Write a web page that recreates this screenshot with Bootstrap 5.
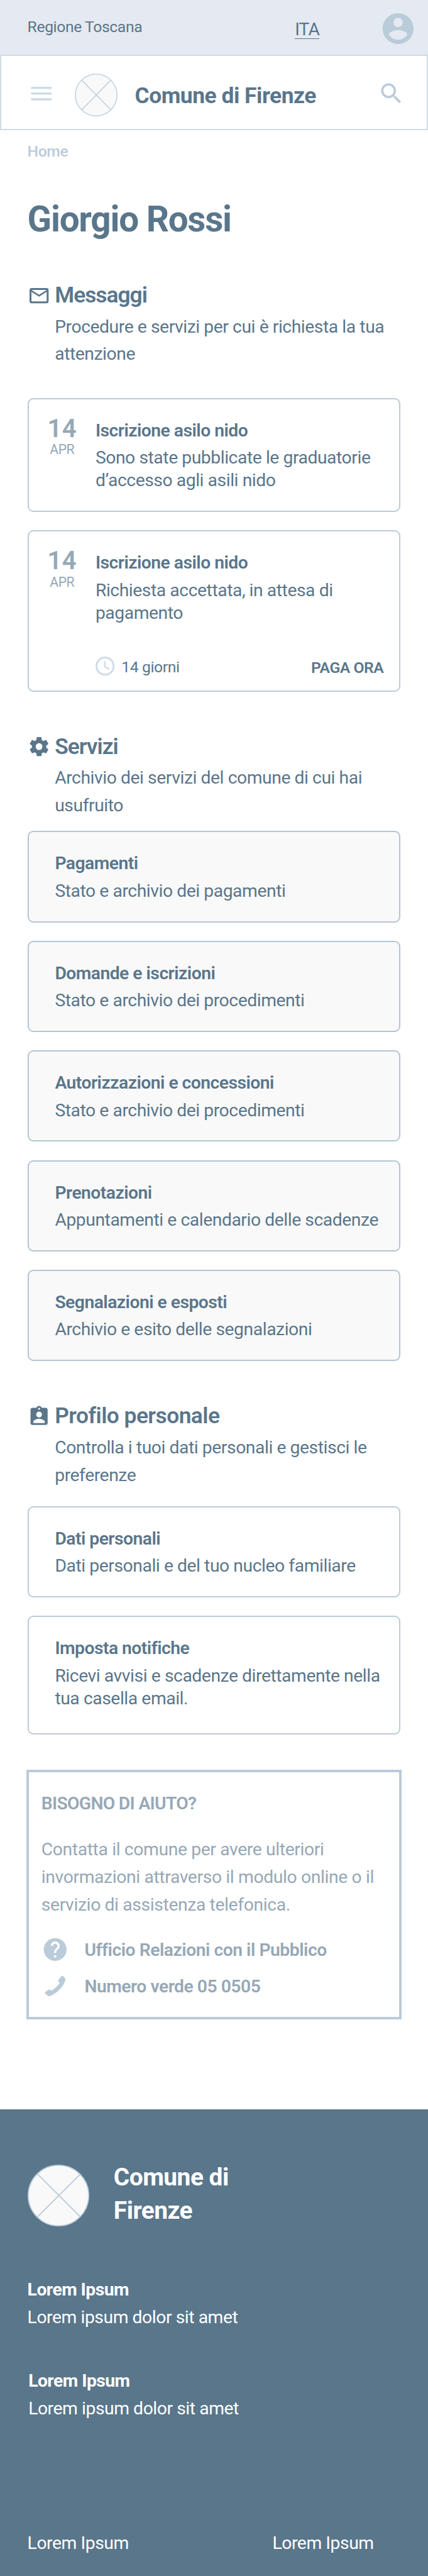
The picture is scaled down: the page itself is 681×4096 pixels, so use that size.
<!DOCTYPE html>
<html lang="it">
<head>
<meta charset="utf-8">
<meta name="viewport" content="width=device-width, initial-scale=1">
<title>Comune di Firenze</title>
<link href="https://cdn.jsdelivr.net/npm/bootstrap@5.3.0/dist/css/bootstrap.min.css" rel="stylesheet">
<style>
:root{--ink:#5a768b;--muted:#96a8b6;--line:#bacbd9;--pale:#cfdce6}
html{font-size:9.086px}
body{font-family:Roboto,"Open Sans",sans-serif;font-size:3.11rem;line-height:4rem;letter-spacing:-.015em;color:var(--ink);background:#fff;height:4096px;overflow:hidden}
h1,h2,h3,p{margin:0;color:inherit}
svg{display:block;flex:none;fill:currentColor}
.semi{font-weight:600;letter-spacing:-.018em}
.small-text{font-size:2.72rem;letter-spacing:-.016em}
.muted{color:var(--muted)}
.i40{width:4rem;height:4rem}
.i48{width:4.8rem;height:4.8rem}
.topbar{height:9.6rem;background:#e5e9f1;padding:0 1.95rem 0 4.8rem}
.topbar .region{margin-top:2.77rem}
.topbar .lang{margin-top:3.54rem;margin-right:10.6rem;line-height:3.2rem;letter-spacing:-.03em;border-bottom:1px solid var(--ink);color:inherit;text-decoration:none}
.topbar svg{width:6.48rem;height:6.48rem;margin-top:1.76rem;color:var(--line)}
.masthead{height:13.2rem;border:2px solid var(--pale);padding:0 3.8rem 0 4.6rem}
.masthead .i48{margin-top:4.2rem}
.masthead .crest{width:7.5rem;height:7.5rem;margin:3.05rem 0 0 3.45rem}
.masthead .site{font-size:3.89rem;font-weight:700;line-height:4.8rem;letter-spacing:-.013em;margin:4.55rem 0 0 3.05rem}
.crest{fill:#f9f9f9;stroke:var(--line)}
.page{padding:0 4.8rem}
.crumb{color:var(--line);margin-top:1.75rem;font-weight:500}
h1{font-size:6.23rem;font-weight:700;line-height:7.2rem;letter-spacing:-.022em;margin-top:6.2rem}
.section-head{margin-top:7.37rem}
.section-head + *{margin-top:5.26rem}
.section-head h2{font-size:3.89rem;font-weight:600;line-height:4.8rem;letter-spacing:-.015em;margin-left:.8rem}
.section-head h2.tight{letter-spacing:-.028em}
.section-head svg{margin-top:.38rem}
.section-head p{line-height:4.8rem;margin:.65rem 0 0 4.8rem}
.section-head.later{margin-top:7.27rem}
.services{margin-top:2.08rem!important}
.profile{margin-top:3.03rem!important}
.stack{gap:3.2rem}
.stack .card{border:2px solid var(--line);border-radius:1rem;color:inherit;height:16rem;padding:3.53rem 0 0 4.6rem;background:#fff}
.stack .card p{margin-top:.78rem}
.services .card{background:#f9f9f9;border-color:#b3c5d4}
.stack .message{height:20rem;padding:3.53rem 2.75rem 0 0}
.stack .message.due{height:28.2rem}
.stack .tall{height:20.8rem}
.date{width:11.7rem;flex:none;margin-top:-.55rem;text-align:center}
.date .day{font-size:4.4rem;font-weight:600;line-height:4.3rem;letter-spacing:.01em}
.date .month{font-size:2.33rem;line-height:3.05rem}
.action{margin-top:5.25rem}
.action svg{margin-left:-.3rem;color:var(--pale)}
.action span{margin:.25rem 0 0 .85rem}
.action a{margin-top:.35rem;color:inherit;text-decoration:none}
.help{margin:6.2rem -.2rem 0;height:43.6rem;border:4px solid var(--line);padding:3.52rem 2.2rem 0;color:var(--muted)}
.help h2{font-size:inherit;line-height:inherit;letter-spacing:-.024em;margin:0 0 3.6rem}
.help p{line-height:4.8rem;letter-spacing:-.0125em;margin-bottom:3.08rem}
.help li{height:4.8rem;line-height:4.8rem;margin-bottom:1.6rem;letter-spacing:-.0165em}
.help li svg{color:var(--line)}
.help li span{padding:.1rem 0 0 2.75rem}
.foot{margin-top:15.8rem;height:83rem;background:var(--ink);color:#fff;padding:9.05rem 4.8rem 0;line-height:4.8rem}
.foot .crest{width:10.8rem;height:10.8rem;margin-top:.6rem}
.foot .site{font-size:4.28rem;font-weight:700;line-height:5.8rem;letter-spacing:-.013em;margin-left:4.3rem}
.foot .block{margin-top:8.5rem}
.foot .block + .block{margin:6.4rem 0 0 .17rem}
.foot b{font-weight:700;letter-spacing:-.018em}
.foot .links{margin-top:18.8rem;padding-right:4.7rem}
</style>
</head>
<body>
<div class="topbar d-flex align-items-start">
  <span class="region small-text">Regione Toscana</span>
  <a class="lang ms-auto" href="#">ITA</a>
  <svg viewBox="0 0 24 24"><path d="M12 2C6.48 2 2 6.48 2 12s4.48 10 10 10 10-4.480 10-10S17.520 2 12 2zm0 3c1.660 0 3 1.340 3 3s-1.340 3-3 3-3-1.340-3-3 1.340-3 3-3zm0 14.200c-2.500 0-4.710-1.280-6-3.220.030-1.990 4-3.080 6-3.080 1.990 0 5.970 1.090 6 3.080-1.290 1.940-3.500 3.220-6 3.220z"/></svg>
</div>
<header class="masthead d-flex align-items-start">
  <svg class="i48" viewBox="0 0 24 24" style="color:var(--pale)"><path d="M3 18h18v-2H3v2zm0-5h18v-2H3v2zm0-7v2h18V6H3z"/></svg>
  <svg class="crest" viewBox="0 0 75 75" stroke-width="1.5"><circle cx="37.500" cy="37.500" r="36.500"/><path d="M12 11.500l51.500 52M63 11.500l-51 52"/></svg>
  <span class="site">Comune di Firenze</span>
  <svg class="i48 ms-auto" viewBox="0 0 24 24" style="color:var(--line)"><path d="M15.500 14h-.79l-.28-.27C15.410 12.590 16 11.110 16 9.500 16 5.910 13.090 3 9.500 3S3 5.910 3 9.500 5.910 16 9.500 16c1.610 0 3.090-.59 4.230-1.570l.27.28v.79l5 4.990L20.490 19l-4.990-5zm-6 0C7.010 14 5 11.990 5 9.500S7.010 5 9.500 5 14 7.010 14 9.500 11.990 14 9.500 14z"/></svg>
</header>
<main class="page">
  <div class="crumb small-text">Home</div>
  <h1>Giorgio Rossi</h1>

  <section class="section-head">
    <div class="d-flex align-items-start"><svg class="i40" viewBox="0 0 24 24"><path d="M20 4H4c-1.100 0-1.990.9-1.990 2L2 18c0 1.100.9 2 2 2h16c1.100 0 2-.9 2-2V6c0-1.100-.9-2-2-2zm0 14H4V8l8 5 8-5v10zm-8-7L4 6h16l-8 5z"/></svg><h2 class="tight">Messaggi</h2></div>
    <p>Procedure e servizi per cui è richiesta la tua<br>attenzione</p>
  </section>
  <div class="stack d-flex flex-column">
    <article class="card message flex-row">
      <div class="date muted"><div class="day">14</div><div class="month">APR</div></div>
      <div class="flex-grow-1"><div class="semi">Iscrizione asilo nido</div><p>Sono state pubblicate le graduatorie<br>d’accesso agli asili nido</p></div>
    </article>
    <article class="card message due flex-row">
      <div class="date muted"><div class="day">14</div><div class="month">APR</div></div>
      <div class="flex-grow-1"><div class="semi">Iscrizione asilo nido</div><p>Richiesta accettata, in attesa di<br>pagamento</p>
        <div class="action small-text d-flex align-items-start">
          <svg class="i40" viewBox="0 0 24 24"><path d="M11.990 2C6.470 2 2 6.480 2 12s4.470 10 9.990 10C17.520 22 22 17.520 22 12S17.520 2 11.990 2zM12 20c-4.420 0-8-3.580-8-8s3.580-8 8-8 8 3.580 8 8-3.580 8-8 8zM12.500 7H11v6l5.250 3.150.75-1.230-4.500-2.670V7z"/></svg>
          <span>14 giorni</span><a class="semi ms-auto" href="#">PAGA ORA</a>
        </div>
      </div>
    </article>
  </div>

  <section class="section-head later">
    <div class="d-flex align-items-start"><svg class="i40" viewBox="0 0 24 24"><path d="M19.430 12.980c.04-.32.070-.64.070-.98s-.03-.66-.07-.98l2.110-1.650c.19-.15.24-.42.120-.64l-2-3.460c-.12-.22-.39-.3-.61-.22l-2.490 1c-.52-.4-1.080-.73-1.690-.98l-.38-2.650C14.460 2.180 14.250 2 14 2h-4c-.25 0-.46.180-.49.420l-.38 2.650c-.61.250-1.170.59-1.690.98l-2.490-1c-.23-.09-.49 0-.61.220l-2 3.460c-.13.220-.07.490.12.640l2.110 1.650c-.04.320-.07.650-.07.980s.03.660.07.980l-2.110 1.650c-.19.150-.24.420-.12.640l2 3.460c.12.220.39.300.61.220l2.490-1c.52.400 1.080.730 1.690.980l.38 2.650c.03.240.24.420.49.420h4c.25 0 .46-.18.490-.42l.38-2.650c.61-.25 1.170-.59 1.690-.98l2.490 1c.23.090.49 0 .61-.22l2-3.460c.12-.22.070-.49-.12-.64l-2.110-1.650zM12 15.500c-1.930 0-3.500-1.570-3.500-3.500s1.570-3.500 3.500-3.500 3.500 1.570 3.500 3.500-1.570 3.500-3.500 3.500z"/></svg><h2 class="tight">Servizi</h2></div>
    <p>Archivio dei servizi del comune di cui hai<br>usufruito</p>
  </section>
  <div class="stack services d-flex flex-column">
    <article class="card"><div class="semi">Pagamenti</div><p>Stato e archivio dei pagamenti</p></article>
    <article class="card"><div class="semi">Domande e iscrizioni</div><p>Stato e archivio dei procedimenti</p></article>
    <article class="card"><div class="semi">Autorizzazioni e concessioni</div><p>Stato e archivio dei procedimenti</p></article>
    <article class="card"><div class="semi">Prenotazioni</div><p>Appuntamenti e calendario delle scadenze</p></article>
    <article class="card"><div class="semi">Segnalazioni e esposti</div><p>Archivio e esito delle segnalazioni</p></article>
  </div>

  <section class="section-head later">
    <div class="d-flex align-items-start"><svg class="i40" viewBox="0 0 24 24"><path d="M19 3h-4.180C14.400 1.840 13.300 1 12 1c-1.300 0-2.400.84-2.820 2H5c-1.100 0-2 .9-2 2v14c0 1.100.9 2 2 2h14c1.100 0 2-.9 2-2V5c0-1.100-.9-2-2-2zm-7 0c.55 0 1 .45 1 1s-.45 1-1 1-1-.45-1-1 .45-1 1-1zm0 4c1.660 0 3 1.340 3 3s-1.340 3-3 3-3-1.340-3-3 1.340-3 3-3zm6 12H6v-1.400c0-2 4-3.100 6-3.100s6 1.100 6 3.100V19z"/></svg><h2>Profilo personale</h2></div>
    <p>Controlla i tuoi dati personali e gestisci le<br>preferenze</p>
  </section>
  <div class="stack profile d-flex flex-column">
    <article class="card"><div class="semi">Dati personali</div><p>Dati personali e del tuo nucleo familiare</p></article>
    <article class="card tall"><div class="semi">Imposta notifiche</div><p>Ricevi avvisi e scadenze direttamente nella<br>tua casella email.</p></article>
  </div>

  <aside class="help">
    <h2 class="semi">BISOGNO DI AIUTO?</h2>
    <p>Contatta il comune per avere ulteriori<br>invormazioni attraverso il modulo online o il<br>servizio di assistenza telefonica.</p>
    <ul class="list-unstyled semi m-0">
      <li class="d-flex"><svg class="i48" viewBox="0 0 24 24"><path d="M12 2C6.480 2 2 6.480 2 12s4.480 10 10 10 10-4.480 10-10S17.520 2 12 2zm1 17h-2v-2h2v2zm2.070-7.750l-.9.920C13.450 12.900 13 13.500 13 15h-2v-.5c0-1.100.45-2.100 1.170-2.830l1.240-1.260c.37-.36.590-.86.590-1.410 0-1.100-.9-2-2-2s-2 .9-2 2H8c0-2.210 1.790-4 4-4s4 1.790 4 4c0 .88-.36 1.680-.93 2.250z"/></svg><span>Ufficio Relazioni con il Pubblico</span></li>
      <li class="d-flex"><svg class="i48" viewBox="0 0 24 24"><path d="M17.600 3.300Q18.200 2.700 18.800 3.300L20.600 5.200Q21 5.700 20.900 6.500C20.400 11.500 12.500 19.800 7 20.900Q6.200 21.100 5.600 20.600L3.400 18.700Q2.700 18 3.400 17.300L6.200 15.300Q7 14.800 7.700 15.400L8.800 16.200C11.500 14.500 14.200 12 16 9.400L14.900 8.300Q14.300 7.600 14.700 6.900Z"/></svg><span>Numero verde 05 0505</span></li>
    </ul>
  </aside>
</main>
<footer class="foot">
  <div class="d-flex align-items-start">
    <svg class="crest" viewBox="0 0 108 108" stroke-width="2"><circle cx="54" cy="54" r="53"/><path d="M17 16l75.500 75.500M92.500 16L17 91.500"/></svg>
    <div class="site">Comune di<br>Firenze</div>
  </div>
  <div class="block"><b>Lorem Ipsum</b><br>Lorem ipsum dolor sit amet</div>
  <div class="block"><b>Lorem Ipsum</b><br>Lorem ipsum dolor sit amet</div>
  <div class="links d-flex justify-content-between"><span>Lorem Ipsum</span><span>Lorem Ipsum</span></div>
</footer>
<script src="https://cdn.jsdelivr.net/npm/bootstrap@5.3.0/dist/js/bootstrap.bundle.min.js"></script>
</body>
</html>
